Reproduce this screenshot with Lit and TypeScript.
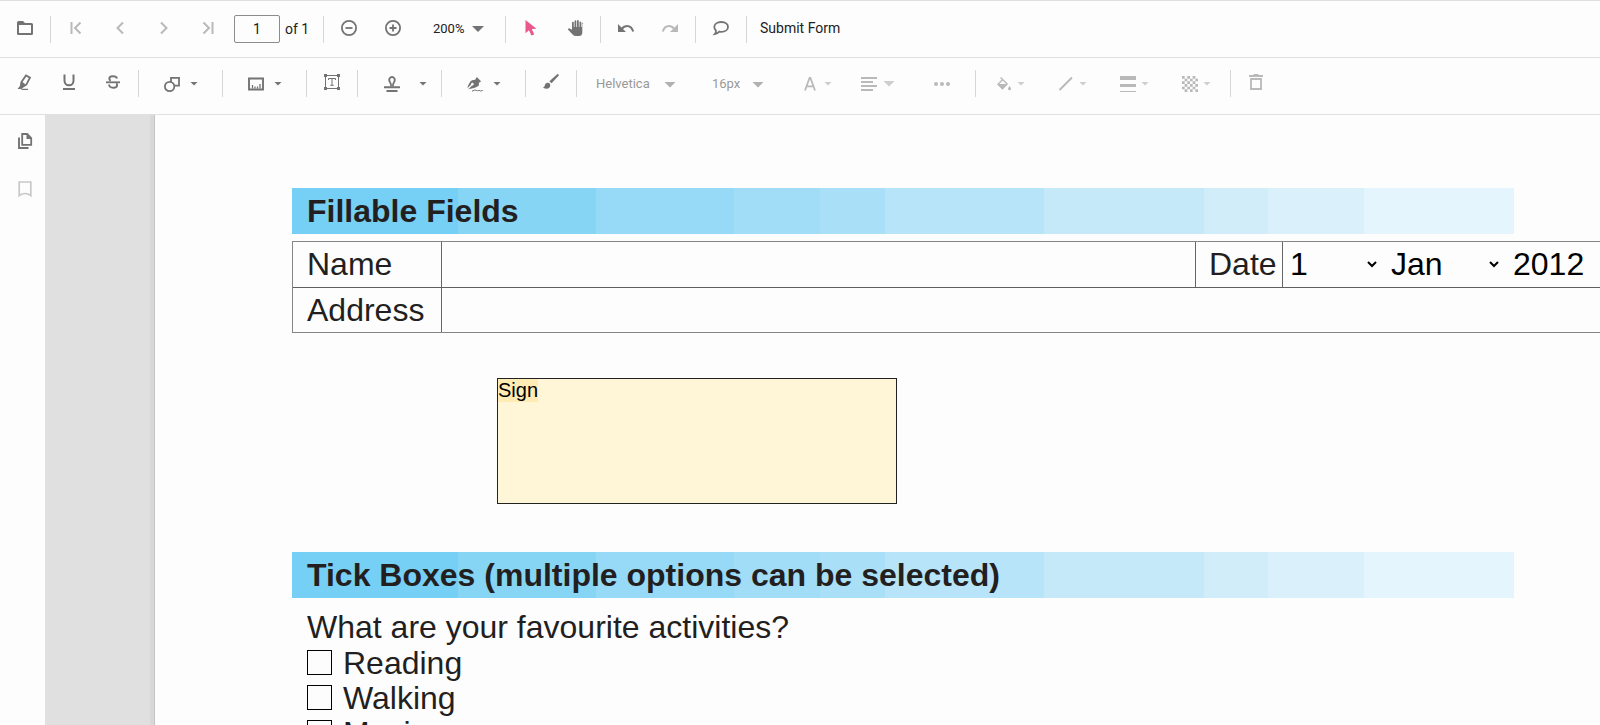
import { LitElement, html, svg, css, TemplateResult } from "lit";
import { customElement, property, state } from "lit/decorators.js";
import { classMap } from "lit/directives/class-map.js";

const stroke = (d: string, w = 2) =>
  svg`<path d=${d} fill="none" stroke="currentColor" stroke-width=${w} />`;
const fill = (d: string) => svg`<path d=${d} fill="currentColor" fill-rule="evenodd" />`;

const checker = () => {
  const cells = [];
  for (let y = 0; y < 6; y++)
    for (let x = 0; x < 6; x++)
      if ((x + y) % 2 === 0) cells.push(`M${(x * 8) / 3} ${(y * 8) / 3}h2.67v2.67h-2.67z`);
  return fill(cells.join(""));
};

const icons: Record<string, () => TemplateResult | TemplateResult[]> = {
  open: () => fill("M1.500 1H6l2 2h6.500q1.500 0 1.500 1.500v9q0 1.500-1.500 1.500h-13Q0 15 0 13.500v-11Q0 1 1.500 1zM2 5v8h12V5z"),
  first: () => stroke("M3.500 2v12M12.500 2.500 7 8l5.500 5.500"),
  prev: () => stroke("M11 2.500 5.500 8l5.500 5.500"),
  next: () => stroke("M5 2.500 10.500 8 5 13.500"),
  last: () => stroke("M12.500 2v12M3.500 2.500 9 8l-5.500 5.500"),
  zoomOut: () => [svg`<circle cx="8" cy="8" r="7.100" fill="none" stroke="currentColor" stroke-width="1.800" />`, stroke("M4.500 8h7", 1.8)] as any,
  zoomIn: () => [svg`<circle cx="8" cy="8" r="7.100" fill="none" stroke="currentColor" stroke-width="1.800" />`, stroke("M4.500 8h7M8 4.500v7", 1.8)] as any,
  cursor: () => fill("M2.500 0v13.200L6 10.200l2.400 5.400 2.800-1.200-2.400-5.300 4.700-.3z"),
  hand: () => fill("M15.300 3.500v9q0 3.500-3.500 3.500H8.800q-1.700 0-2.900-1.300L.7 9.300l.9-.8q.5-.3 1-.1L5 9.700V2.600q0-.9.9-.9t.9.9V7h.7V1.300q0-1 .9-1t.9 1V7h.7V1q0-1 .9-1t.9 1v6h.7V2.300q0-.9.9-.9t.9.9V7h.6V3.500q0-.8.7-.8t.7.8z"),
  undo: () => [fill("M0 4v8h8L5.200 9.200z"), stroke("M3.500 9Q6 6 9 6q4.500 0 6.200 5.500")] as any,
  redo: () => [fill("M16 4v8H8l2.800-2.800z"), stroke("M12.500 9Q10 6 7 6 2.500 6 .8 11.500")] as any,
  comment: () => stroke("M8.300 2C12.500 2 15 4.100 15 6.900s-2.500 4.900-6.700 4.900q-1 0-2-.2Q4.500 13.700 1.800 14q1.400-1.500 1.100-3.500Q1.300 9 1.300 6.900C1.300 4.100 4.100 2 8.300 2z", 1.8),
  highlight: () => [stroke("M4.500 8 9 1.500l4 2.200-3.700 7-4.500 2.600z", 1.8), fill("M3.800 7.500 2.900 12 .5 15h4l2-2 2.500-1.500-2-2.500z"), stroke("M4.500 15.400H11", 1.2)] as any,
  underline: () => stroke("M3.500.5v6.300a4.500 4.500 0 0 0 9 0V.5M2 15h12"),
  strike: () => [stroke("M1 8.300h14", 1.8), stroke("M12 4.500Q11.500 2.300 8 2.300 4.300 2.300 4.300 4.700q0 1.300 1.500 2M4 10.500q.3 3.200 4.300 3.200 3.800 0 3.800-2.500 0-1.300-.8-2", 1.9)] as any,
  shapes: () => [stroke("M7 6V1.900h8v7.800h-4.300", 1.8), svg`<circle cx="5.600" cy="10.500" r="4.700" fill="none" stroke="currentColor" stroke-width="1.800" />`] as any,
  measure: () => [stroke("M1 2.500h14v11H1z", 1.9), stroke("M4.500 12.500V9M7 12.500v-2M9.500 12.500v-2M12 12.500V8", 1.3)] as any,
  freeText: () => [stroke("M1.500 1.500h13v13h-13z", 1), fill("M0 0h3v3H0zM13 0h3v3h-3zM0 13h3v3H0zM13 13h3v3h-3z"), stroke("M4.500 6V4.500h7V6M8 4.500v7M6.300 11.300h3.400", 1)] as any,
  stamp: () => [stroke("M7 10.500q.4-2.500-1-4.300Q4.500 3.800 5.700 2.200 6.500 1 8 1t2.300 1.200q1.200 1.600-.3 4-1.400 1.800-1 4.300", 1.8), stroke("M0 11.300h16M2.500 15.100h11")] as any,
  sign: () => [fill("M9.800 1 14 5.200l-1 1.100-1 .1-.2 3.200Q9 12.200 1.400 13.200l3.600-3.800a1.300 1.300 0 1 0-.9-.9L.4 12.300Q1.500 6.500 5 4.200l3.200-.5z"), stroke("M5 15.200q3-1.500 4-1t1.500.5 1.500-.2 1.500.5l2.200-.5", 1)] as any,
  ink: () => [fill("M14.200.3q.7-.5 1.300.1t.1 1.300L8.500 9.300 6.400 7.200z"), fill("M4.500 8.800q2.500-.3 2.800 2.300 0 3.800-4.300 3.600Q1 14.600 0 13.300q1.700-.2 1.800-2Q2.200 9 4.500 8.800z")] as any,
  fontColor: () => stroke("M3 14.500 7.600 1.800h.8L13 14.500M4.700 10.300h6.600", 1.8),
  align: () => stroke("M0 2h16M0 6h12M0 10h16M0 14h12", 1.9),
  more: () => fill("M0 8a2 2 0 1 1 4 0 2 2 0 0 1-4 0M6 8a2 2 0 1 1 4 0 2 2 0 0 1-4 0M12 8a2 2 0 1 1 4 0 2 2 0 0 1-4 0"),
  bucket: () => [stroke("M4.500 1.500 11 7.800 6.500 12.600 2 8.200 6.600 3.700", 1.4), fill("M1.300 8h10.400l-5.200 5.700zM13.500 10q1.700 2 1.600 2.900-.2 1.300-1.600 1.300T12 12.900q0-.9 1.500-2.900z")] as any,
  line: () => stroke("M1.500 14 14 1.500", 1.9),
  thickness: () => fill("M0 0h16v4H0zM0 8h16v3H0zM0 15h16v1H0z"),
  opacity: () => checker(),
  trash: () => [stroke("M1 2h14", 2), stroke("M3 5h10v10H3z", 1.8), fill("M5.500 0h5v2h-5z")] as any,
  pages: () => [stroke("M5.200 1h5l4 4v6.800h-9z", 1.8), fill("M9.500 1l5 5h-5z"), stroke("M2 4.500V15h9.500", 1.9)] as any,
  bookmark: () => stroke("M2.200 1h11.600v13.700Q11 12.500 8 12.500t-5.800 2.200z", 1.7),
};

@customElement("pdf-icon")
export class PdfIcon extends LitElement {
  static styles = css`
    :host { display: block; width: 16px; height: 16px; }
    svg { display: block; overflow: visible; }
  `;
  @property() name = "";
  render() {
    return html`<svg width="16" height="16" viewBox="0 0 16 16" aria-hidden="true">${icons[this.name]?.()}</svg>`;
  }
}

interface Tool {
  icon?: string;
  label?: string;
  kind: "tool" | "split" | "split wide" | "compact" | "format" | "format align" | "more" | "sep";
  off?: boolean;
}
const t = (icon: string, label: string, off = false): Tool => ({ icon, label, kind: "tool", off });
const split = (icon: string, label: string): Tool => ({ icon, label, kind: "split" });
const compact = (icon: string, label: string): Tool => ({ icon, label, kind: "compact", off: true });
const sep: Tool = { kind: "sep" };

@customElement("app-root")
export class AppRoot extends LitElement {
  static styles = css`
    :host {
      display: flex;
      flex-direction: column;
      height: 100vh;
      overflow: hidden;
      background: #fdfdfd;
      color: #231f20;
      font-family: Roboto, sans-serif;
      font-size: 14px;
    }
    * { box-sizing: border-box; }
    button, input, select { margin: 0; font: inherit; color: inherit; }
    button { padding: 0; border: 0; background: none; }
    .bar {
      display: flex;
      flex: none;
      align-items: center;
      height: 57px;
      padding-left: 3px;
      border-bottom: 1px solid #e0e0e0;
      color: #737373;
    }
    .main { height: 58px; border-top: 1px solid #e0e0e0; }
    .edit { padding-bottom: 5px; }
    .sep { flex: none; width: 1px; height: 27px; margin: 0 3px; background: #d6d6d6; }
    .tool, .more { display: flex; flex: none; align-items: center; justify-content: center; width: 44px; height: 40px; padding-bottom: 2px; }
    .edit .tool { padding-bottom: 3px; }
    .more { width: 60px; padding-bottom: 0; }
    .split, .compact, .format { display: flex; flex: none; align-items: center; height: 40px; }
    .split { width: 77px; gap: 10px; padding-left: 22px; }
    .wide { gap: 19px; padding-left: 23px; }
    .compact { width: 62px; gap: 5px; padding-left: 17px; }
    .format { width: 64px; gap: 6px; padding-left: 18px; }
    .align { padding-left: 13px; }
    .off { color: #b9b9b9; }
    .active { color: #e9578d; }
    .caret { flex: none; width: 8px; height: 4px; background: currentColor; clip-path: polygon(0 0, 100% 0, 50% 100%); }
    .align .caret { width: 12px; height: 6px; }
    .compact .caret, .format .caret { opacity: 0.7; }
    .pager { display: flex; align-items: center; gap: 5px; width: 90px; padding-left: 4px; color: #212121; }
    .number {
      width: 46px;
      height: 28px;
      padding: 0;
      border: 1px solid #8c8c8c;
      border-radius: 2px;
      background: #fdfdfd;
      font-size: 14px;
      text-align: center;
    }
    .combo { display: grid; flex: none; align-items: center; height: 28px; padding: 0 20px 0 16px; font-size: 13px; color: #999; }
    .combo select { grid-area: 1 / 1; width: 100%; height: 28px; padding: 0; border: 0; background: none; appearance: none; }
    .combo .caret { grid-area: 1 / 1; justify-self: end; width: 12px; height: 6px; margin-top: 2px; color: #b0b0b0; pointer-events: none; }
    .zoom { width: 87px; margin-bottom: 2px; padding: 0 18px; color: #212121; }
    .zoom .caret { color: #737373; }
    .family { width: 116px; }
    .size { width: 88px; }
    .submit { height: 40px; padding: 0 10px 2px; color: #212121; }
    .body { display: flex; flex: 1; min-height: 0; }
    .side { display: flex; flex: none; flex-direction: column; align-items: center; width: 45px; padding: 2px 0 0 5px; color: #737373; }
    .side button { display: grid; place-items: center; width: 44px; height: 48px; }
    .side .faint { color: #c8c8c8; }
    .desk { flex: 1; min-width: 0; padding-left: 110px; overflow: hidden; background: #e0e0e0; }
    .page {
      height: 100%;
      padding: 73px 0 0 137px;
      overflow: hidden;
      background: #fdfdfd;
      box-shadow: 0 0 0 1px #c4c4c4, 0 0 0 5px #d8d8d8;
      font: 32px/36px "Liberation Sans", Arial, sans-serif;
    }
    .banner {
      margin: 0 86px 0 0;
      padding: 0 15px;
      font-size: 32px;
      line-height: 46px;
      font-weight: bold;
      background: linear-gradient(to right,
        #76cff4 13.6%, #87d5f4 0 24.9%, #97daf7 0 36.2%, #a2ddf8 0 43.2%, #aadff8 0 48.5%,
        #b7e4f9 0 61.5%, #c6e9fa 0 74.6%, #d1edf9 0 79.9%, #daf0fa 0 87.7%, #e5f5fd 0);
    }
    .fields { margin-top: 7px; border: solid #858585; border-width: 1px 0 1px 1px; }
    .row { display: grid; grid-template-columns: 148px minmax(0, 1fr) 87px 318px; height: 45px; overflow: hidden; line-height: 45px; }
    .row + .row { grid-template-columns: 148px minmax(0, 1fr); border-top: 1px solid #5f5f5f; }
    .cell { padding-left: 14px; }
    .field { width: 100%; min-width: 0; border: 0; border-left: 1px solid #666; border-radius: 0; background: none; outline: none; }
    .datecap { border-left: 1px solid #666; padding-left: 13px; }
    .date { display: flex; gap: 4px; border-left: 1px solid #666; overflow: hidden; }
    .date select { flex: none; width: 97px; height: 44px; padding: 0 0 0 3px; border: 0; background: transparent; color: #000; }
    .date .month { width: 118px; }
    .sign {
      display: flex;
      align-items: flex-start;
      width: 400px;
      height: 126px;
      margin: 45px 0 48px 205px;
      border: 1px solid #222;
      background: #fff5d7;
      color: #000;
      font-size: 20px;
      line-height: 23px;
    }
    .sign span { background: #ffecb5; }
    fieldset { min-width: 0; margin: 0; padding: 11px 15px 0; border: 0; }
    legend { float: left; width: 100%; padding: 0; }
    .option { display: flex; clear: both; align-items: center; gap: 11px; height: 35px; }
    .option input { width: 25px; height: 25px; border: 1px solid #000; appearance: none; }
    .option input:checked { background: #222; box-shadow: inset 0 0 0 4px #fdfdfd; }
  `;

  @state() private mode = "cursor";

  private item = (x: Tool) => {
    if (x.kind === "sep") return html`<span class="sep"></span>`;
    const drop = x.kind !== "tool" && x.kind !== "more";
    const classes = { off: !!x.off, active: x.icon === this.mode };
    for (const name of x.kind.split(" ")) (classes as Record<string, boolean>)[name] = true;
    return html`<button
      class=${classMap(classes)}
      aria-label=${x.label!}
      aria-haspopup=${drop ? "menu" : "false"}
      @click=${() => { if (x.icon === "cursor" || x.icon === "hand") this.mode = x.icon; }}
    ><pdf-icon name=${x.icon!}></pdf-icon>${drop ? html`<span class="caret"></span>` : ""}</button>`;
  };

  private combo = (cls: string, label: string, options: string[]) => html`
    <span class="combo ${cls}">
      <select aria-label=${label}>${options.map((o) => html`<option>${o}</option>`)}</select>
      <span class="caret"></span>
    </span>`;

  render() {
    const i = (...list: Tool[]) => list.map(this.item);
    return html`
      <div class="bar main" role="toolbar" aria-label="Viewer">
        ${i(t("open", "Open file"), sep, t("first", "First page", true), t("prev", "Previous page", true),
          t("next", "Next page", true), t("last", "Last page", true))}
        <span class="pager"><input class="number" aria-label="Page number" value="1" /><span>of 1</span></span>
        ${i(sep, t("zoomOut", "Zoom out"), t("zoomIn", "Zoom in"))}
        ${this.combo("zoom", "Zoom", ["200%", "100%", "50%"])}
        ${i(sep, t("cursor", "Text selection"), t("hand", "Pan"), sep, t("undo", "Undo"), t("redo", "Redo", true),
          sep, t("comment", "Comments"), sep)}
        <button class="submit">Submit Form</button>
      </div>
      <div class="bar edit" role="toolbar" aria-label="Annotations">
        ${i(t("highlight", "Highlight"), t("underline", "Underline"), t("strike", "Strikethrough"), sep,
          split("shapes", "Shapes"), sep, split("measure", "Measure"), sep, t("freeText", "Free text"), sep,
          { icon: "stamp", label: "Stamp", kind: "split wide" }, sep, split("sign", "Signature"), sep,
          t("ink", "Ink"), sep)}
        ${this.combo("family", "Font family", ["Helvetica", "Courier", "Symbol"])}
        ${this.combo("size", "Font size", ["16px", "18px", "20px"])}
        ${i({ icon: "fontColor", label: "Font color", kind: "format", off: true },
          { icon: "align", label: "Text alignment", kind: "format align", off: true },
          { icon: "more", label: "More formatting", kind: "more", off: true },
          sep, compact("bucket", "Fill color"), compact("line", "Stroke color"), compact("thickness", "Thickness"),
          compact("opacity", "Opacity"), sep, t("trash", "Delete", true))}
      </div>
      <div class="body">
        <nav class="side">
          <button aria-label="Page thumbnails"><pdf-icon name="pages"></pdf-icon></button>
          <button class="faint" aria-label="Bookmarks"><pdf-icon name="bookmark"></pdf-icon></button>
        </nav>
        <main class="desk">
          <div class="page">
            <h2 class="banner">Fillable Fields</h2>
            <div class="fields">
              <div class="row">
                <label class="cell" for="name">Name</label><input class="field" id="name" />
                <label class="datecap" for="day">Date</label>
                <div class="date">
                  <select id="day"><option>1</option><option>2</option></select>
                  <select class="month" aria-label="Month"><option>Jan</option><option>Feb</option></select>
                  <select class="month" aria-label="Year"><option>2012</option><option>2013</option></select>
                </div>
              </div>
              <div class="row">
                <label class="cell" for="address">Address</label><input class="field" id="address" />
              </div>
            </div>
            <button class="sign"><span>Sign</span></button>
            <h2 class="banner">Tick Boxes (multiple options can be selected)</h2>
            <fieldset>
              <legend>What are your favourite activities?</legend>
              ${["Reading", "Walking", "Music"].map(
                (o) => html`<label class="option"><input type="checkbox" />${o}</label>`)}
            </fieldset>
          </div>
        </main>
      </div>`;
  }
}
